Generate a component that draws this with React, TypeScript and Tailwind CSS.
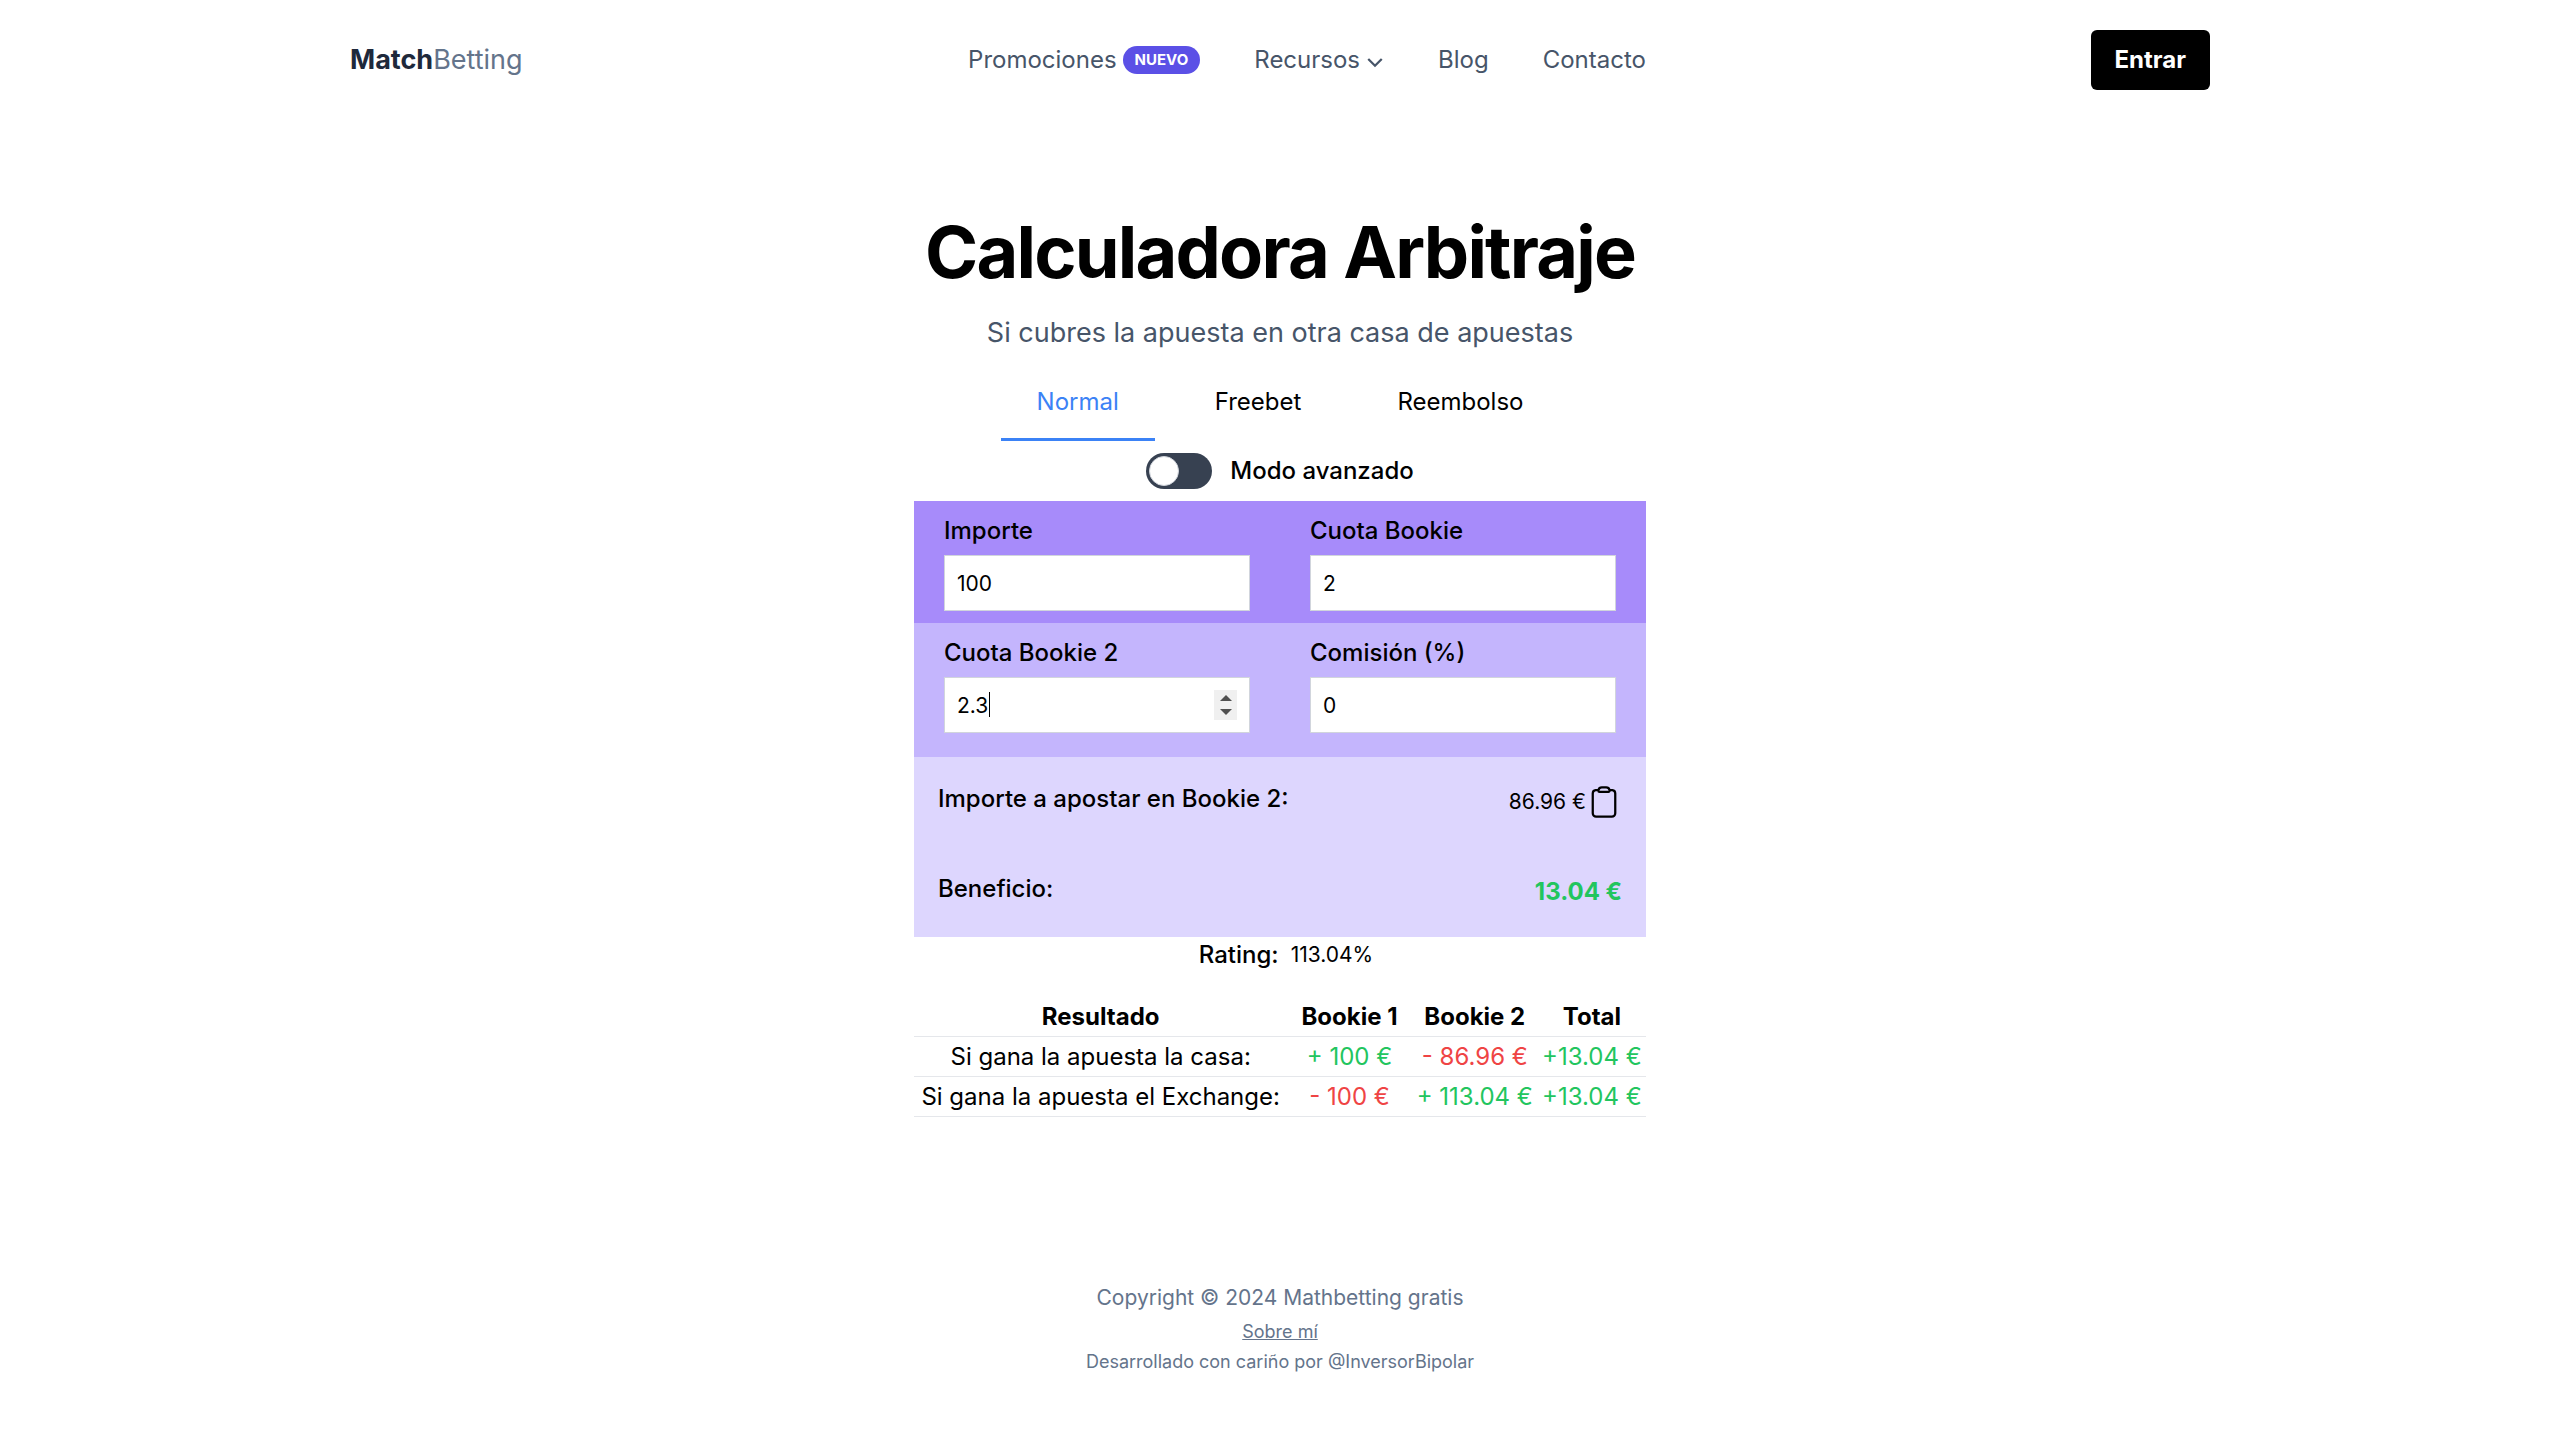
import { ReactNode } from "react";

const navLink = "flex items-center text-[#475569] hover:text-black";

function Field({ id, label, value, children }: { id: string; label: string; value: string; children?: ReactNode }) {
  return (
    <div className="px-[30px]">
      <label htmlFor={id} className="mb-1.5 block text-2xl leading-9 font-medium text-black">
        {label}
      </label>
      <div className="relative">
        <input
          id={id}
          type="text"
          inputMode="decimal"
          defaultValue={value}
          className="block h-14 w-full border border-gray-300 bg-white px-3 text-[21px] text-black outline-none"
        />
        {children}
      </div>
    </div>
  );
}

function Spinner() {
  return (
    <>
      <span className="absolute top-[15px] left-[45px] h-[25px] w-px bg-black" />
      <div className="absolute top-[13px] right-[13px] flex h-[30px] w-[23px] flex-col bg-[#f0f0f0]">
        <button type="button" aria-label="Aumentar" className="flex flex-1 items-end justify-center pb-1">
          <svg width="12" height="6" viewBox="0 0 12 6" fill="#505050">
            <path d="M6 0 12 6H0z" />
          </svg>
        </button>
        <button type="button" aria-label="Disminuir" className="flex flex-1 items-start justify-center pt-1">
          <svg width="12" height="6" viewBox="0 0 12 6" fill="#505050">
            <path d="M0 0H12L6 6z" />
          </svg>
        </button>
      </div>
    </>
  );
}

const rows = [
  { label: "Si gana la apuesta la casa:", b1: "+ 100 €", up1: true, b2: "- 86.96 €", up2: false, total: "+13.04 €" },
  { label: "Si gana la apuesta el Exchange:", b1: "- 100 €", up1: false, b2: "+ 113.04 €", up2: true, total: "+13.04 €" },
];

export default function App() {
  return (
    <div className="flex min-h-screen flex-col bg-white font-['Inter',sans-serif] text-2xl leading-9 font-normal text-black">
      <header className="mx-auto grid w-full max-w-[1920px] grid-cols-[1fr_auto_1fr] items-center px-[30px] py-[30px]">
        <a href="#" className="text-[27px] leading-[42px]">
          <span className="font-bold text-[#1e293b]">Match</span>
          <span className="text-[#64748b]">Betting</span>
        </a>
        <nav className="flex items-center gap-[54px] pl-[54px]">
          <a href="#" className={navLink}>
            Promociones
            <span className="ml-1.5 rounded-full bg-[#5b50e6] px-3 text-[15px] leading-7 font-bold text-white">NUEVO</span>
          </a>
          <button type="button" className={navLink}>
            Recursos
            <svg className="mt-1 ml-1.5" width="18" height="18" viewBox="0 0 24 24" fill="none" stroke="currentColor" strokeWidth="3">
              <path d="M3 8l9 9 9-9" />
            </svg>
          </button>
          <a href="#" className={navLink}>Blog</a>
          <a href="#" className={navLink}>Contacto</a>
        </nav>
        <button type="button" className="h-[60px] justify-self-end rounded-md bg-black px-6 font-bold text-white">
          Entrar
        </button>
      </header>

      <main className="mx-auto mt-[90px] w-full max-w-[732px]">
        <h1 className="text-center text-7xl leading-[84px] font-bold tracking-tight whitespace-nowrap">Calculadora Arbitraje</h1>
        <p className="mt-[18px] text-center text-[27px] leading-[42px] text-[#475569]">Si cubres la apuesta en otra casa de apuestas</p>

        <div role="tablist" className="mt-3 flex justify-center gap-6">
          <button type="button" role="tab" aria-selected="true" className="h-[75px] border-b-[3px] border-[#3b82f6] px-9 text-[#3b82f6]">
            Normal
          </button>
          <button type="button" role="tab" aria-selected="false" className="h-[75px] border-b-[3px] border-transparent px-9">
            Freebet
          </button>
          <button type="button" role="tab" aria-selected="false" className="h-[75px] border-b-[3px] border-transparent px-9">
            Reembolso
          </button>
        </div>

        <label className="mt-3 flex cursor-pointer items-center justify-center font-medium">
          <input type="checkbox" role="switch" className="peer sr-only" />
          <span className="flex h-9 w-[66px] rounded-full bg-[#374151] p-[3px] peer-checked:justify-end">
            <span className="size-[30px] rounded-full border border-gray-300 bg-white" />
          </span>
          <span className="ml-[18px]">Modo avanzado</span>
        </label>

        <form className="mt-3">
          <div className="grid grid-cols-2 bg-[#a78bfa] py-3">
            <Field id="importe" label="Importe" value="100" />
            <Field id="cuota" label="Cuota Bookie" value="2" />
          </div>
          <div className="grid grid-cols-2 bg-[#c4b5fd] pt-3 pb-6">
            <Field id="cuota2" label="Cuota Bookie 2" value="2.3">
              <Spinner />
            </Field>
            <Field id="comision" label="Comisión (%)" value="0" />
          </div>
          <div className="bg-[#ddd6fe] px-6">
            <div className="flex h-[90px] items-center justify-between">
              <span className="pb-1.5 font-medium">Importe a apostar en Bookie 2:</span>
              <span className="flex items-center text-[21px]">
                86.96 €
                <button type="button" aria-label="Copiar">
                  <svg width="36" height="36" viewBox="0 0 24 24" fill="none" stroke="currentColor" strokeWidth="1.5" strokeLinecap="round" strokeLinejoin="round">
                    <path d="M15.666 3.888A2.25 2.25 0 0 0 13.5 2.25h-3c-1.03 0-1.9.693-2.166 1.638m7.332 0c.055.194.084.4.084.612a.75.75 0 0 1-.75.75H9a.75.75 0 0 1-.75-.75c0-.212.03-.418.084-.612m7.332 0c.646.049 1.288.11 1.927.184 1.1.128 1.907 1.077 1.907 2.185V19.5a2.25 2.25 0 0 1-2.25 2.25H6.75A2.25 2.25 0 0 1 4.5 19.5V6.257c0-1.108.806-2.057 1.907-2.185a48.208 48.208 0 0 1 1.927-.184" />
                  </svg>
                </button>
              </span>
            </div>
            <div className="flex h-[90px] items-center justify-between">
              <span className="pb-1.5 font-medium">Beneficio:</span>
              <span className="font-bold text-[#22c55e]">13.04 €</span>
            </div>
          </div>
        </form>

        <p className="flex items-center justify-center pl-3">
          <span className="font-medium">Rating:</span>
          <span className="ml-3 text-[21px]">113.04%</span>
        </p>

        <table className="mt-6 w-full text-center leading-[39px] whitespace-nowrap">
          <thead>
            <tr className="border-b border-gray-200 font-bold">
              <th className="w-[51%]">Resultado</th>
              <th className="w-[17%]">Bookie 1</th>
              <th>Bookie 2</th>
              <th>Total</th>
            </tr>
          </thead>
          <tbody>
            {rows.map((r) => (
              <tr key={r.label} className="border-b border-gray-200">
                <td>{r.label}</td>
                <td className={r.up1 ? "text-[#22c55e]" : "text-[#ef4444]"}>{r.b1}</td>
                <td className={r.up2 ? "text-[#22c55e]" : "text-[#ef4444]"}>{r.b2}</td>
                <td className="text-[#22c55e]">{r.total}</td>
              </tr>
            ))}
          </tbody>
        </table>
      </main>

      <footer className="mt-[166px] pb-16 text-center text-lg leading-[30px] text-[#64748b]">
        <p className="text-[21px]">Copyright © 2024 Mathbetting gratis</p>
        <p className="mt-1"><a href="#" className="underline">Sobre mí</a></p>
        <p>Desarrollado con cariño por @InversorBipolar</p>
      </footer>
    </div>
  );
}
